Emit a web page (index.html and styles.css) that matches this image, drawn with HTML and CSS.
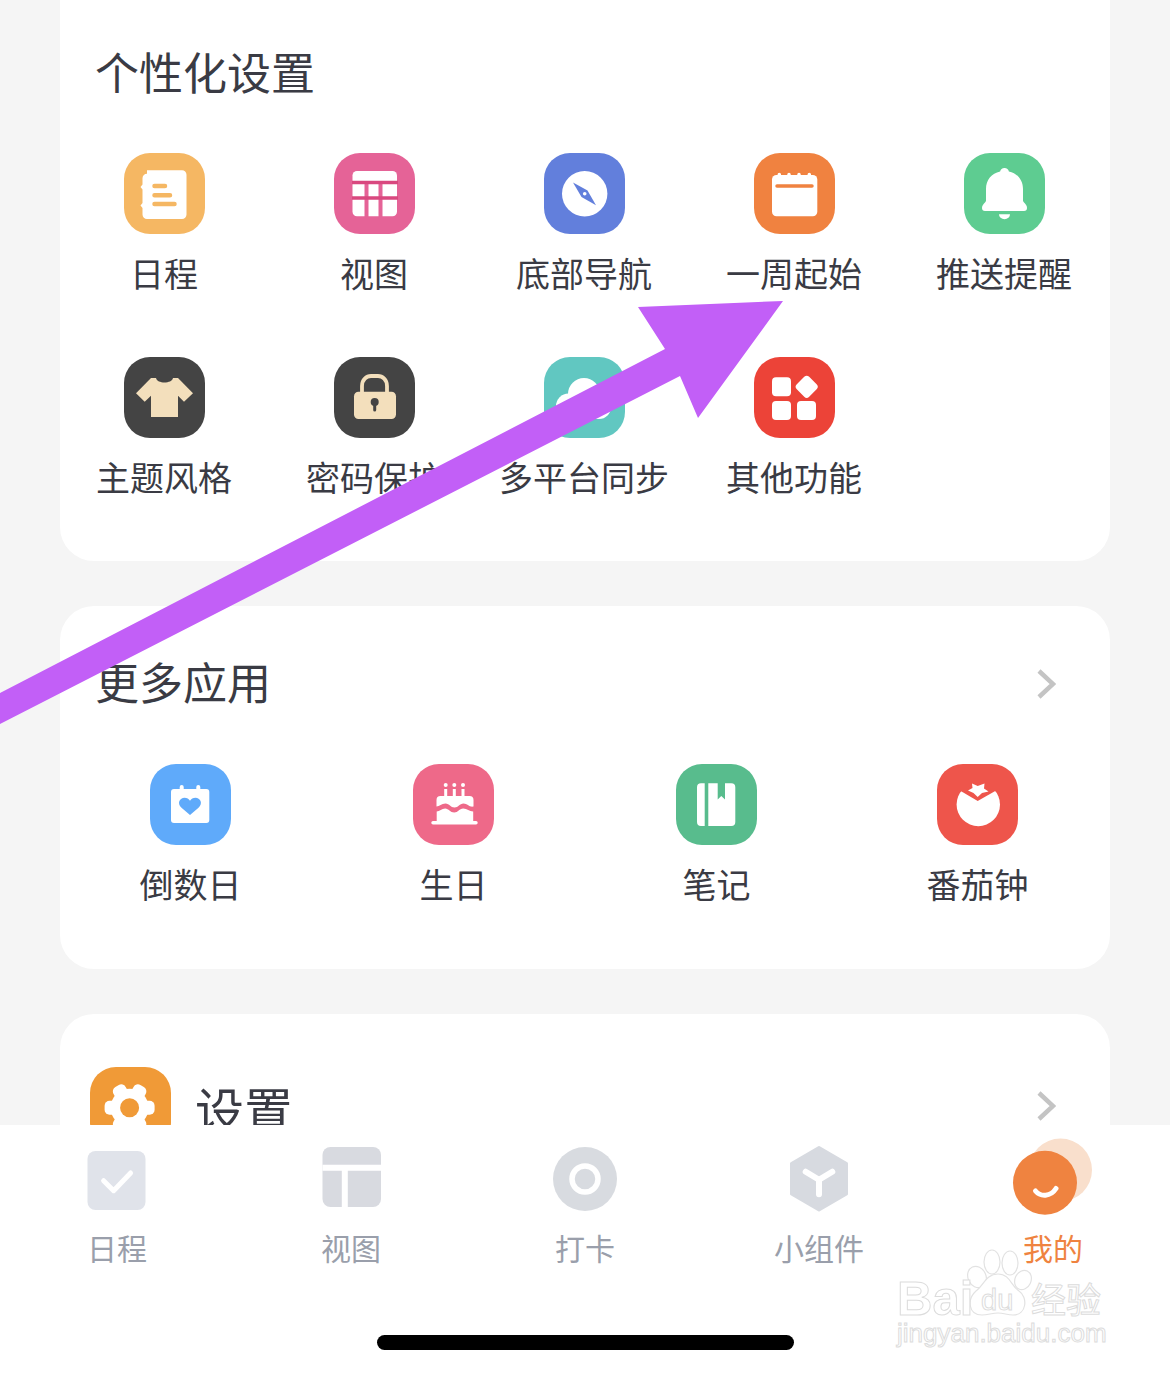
FILE: index.html
```html
<!DOCTYPE html>
<html lang="zh-CN">
<head>
    <meta charset="UTF-8">
    <meta name="viewport" content="width=device-width, initial-scale=1.0">
    <title>我的</title>
    <link rel="stylesheet" href="styles.css">
</head>
<body>
    <div class="page">
        <div class="scroll">
            <section class="card card-personal">
                <h2 class="card-title">个性化设置</h2>
                <div class="grid grid-five">
                    <div class="cell">
                        <div class="tile tile-schedule">
                            <svg viewBox="0 0 81 81"><path fill="#fff" d="M23 17.300h35a4.500 4.500 0 0 1 4.500 4.500v39.700a4.500 4.500 0 0 1-4.500 4.500h-35a4.500 4.500 0 0 1-4.500-4.500v-6.500l-2-2.500 2-2.500v-13.500l-2-2.500 2-2.500v-6.200a4.500 4.500 0 0 1 4.500-4.500z"/><path stroke="#f5b763" stroke-width="4.500" stroke-linecap="round" d="M30.500 33h10.500M30.500 42.300h15.500M30.500 51h20"/></svg>
                        </div>
                        <div class="cell-label">日程</div>
                    </div>
                    <div class="cell">
                        <div class="tile tile-view">
                            <svg viewBox="0 0 81 81"><path fill="#fff" d="M23 18h35.500a4.500 4.500 0 0 1 4.500 4.500v36.300a4.500 4.500 0 0 1-4.500 4.500h-35.500a4.500 4.500 0 0 1-4.500-4.500v-36.300a4.500 4.500 0 0 1 4.500-4.500z"/><path stroke="#e56397" stroke-width="4" d="M32.500 29v35M46.500 29v35"/><path stroke="#d9487f" stroke-width="3.500" d="M18 29.500h46M18 45h46"/></svg>
                        </div>
                        <div class="cell-label">视图</div>
                    </div>
                    <div class="cell">
                        <div class="tile tile-nav">
                            <svg viewBox="0 0 81 81"><circle cx="40.700" cy="40.700" r="22.700" fill="#fff"/><path fill="#627fdc" d="M29 29.500l14.500 8 8.500 14.800-14.500-8.300z"/><circle cx="40.700" cy="40.700" r="1.800" fill="#fff"/></svg>
                        </div>
                        <div class="cell-label">底部导航</div>
                    </div>
                    <div class="cell">
                        <div class="tile tile-week">
                            <svg viewBox="0 0 81 81"><rect x="18" y="22" width="45.300" height="41.300" rx="4.500" fill="#fff"/><path stroke="#fff" stroke-width="3.500" stroke-linecap="round" d="M25.300 21.500v2M35 21.500v2M45 21.500v2M55.300 21.500v2"/><path stroke="#f08240" stroke-width="3.500" stroke-linecap="round" d="M23 33h35"/></svg>
                        </div>
                        <div class="cell-label">一周起始</div>
                    </div>
                    <div class="cell">
                        <div class="tile tile-push">
                            <svg viewBox="0 0 81 81"><path fill="#fff" d="M40.500 15a4.500 4.500 0 0 1 4.400 3.500c8.600 1.800 14.100 8.700 14.100 17.500v11.500c0 2 4 3.500 4 7.500a3 3 0 0 1-3 3h-39a3 3 0 0 1-3-3c0-4 4-5.500 4-7.500v-11.500c0-8.800 5.500-15.700 14.100-17.500a4.500 4.500 0 0 1 4.400-3.500z"/><path fill="#fff" d="M35 61.300h11a5.500 5 0 0 1-11 0z"/></svg>
                        </div>
                        <div class="cell-label">推送提醒</div>
                    </div>
                    <div class="cell">
                        <div class="tile tile-theme">
                            <svg viewBox="0 0 81 81"><path fill="#f3dfbc" d="M27 21h5c1 6 16 6 17 0h5l15 15.300-9 8.400-6-6v21.300h-27v-21.300l-6.300 6-8.700-8.400z"/></svg>
                        </div>
                        <div class="cell-label">主题风格</div>
                    </div>
                    <div class="cell">
                        <div class="tile tile-theme">
                            <svg viewBox="0 0 81 81"><path fill="none" stroke="#f3dfbc" stroke-width="3.800" d="M28 36v-7c0-6.500 4.500-10 9-10h7c4.500 0 9 3.500 9 10v7"/><rect x="20" y="34.700" width="42" height="27.300" rx="4.500" fill="#f3dfbc"/><circle cx="40.700" cy="45" r="4" fill="#444"/><path stroke="#444" stroke-width="3" stroke-linecap="round" d="M40.700 46v7"/></svg>
                        </div>
                        <div class="cell-label">密码保护</div>
                    </div>
                    <div class="cell">
                        <div class="tile tile-sync">
                            <svg viewBox="0 0 81 81"><g fill="#fff"><circle cx="40" cy="37" r="16"/><circle cx="24.500" cy="49" r="12.500"/><circle cx="55" cy="50" r="12"/><rect x="24" y="45" width="31" height="17"/></g></svg>
                        </div>
                        <div class="cell-label">多平台同步</div>
                    </div>
                    <div class="cell">
                        <div class="tile tile-other">
                            <svg viewBox="0 0 81 81"><g fill="#fff"><rect x="18" y="20.300" width="19" height="19" rx="4"/><rect x="18" y="44" width="19" height="19" rx="4"/><rect x="43" y="44" width="19" height="19" rx="4"/><rect x="44" y="21" width="17.500" height="17.500" rx="3.500" transform="rotate(45 52.700 29.700)"/></g></svg>
                        </div>
                        <div class="cell-label">其他功能</div>
                    </div>
                </div>
            </section>

            <section class="card card-more">
                <div class="card-head">
                    <h2 class="card-title">更多应用</h2>
                    <svg class="chevron chevron-head" viewBox="0 0 20 30"><path d="M3 2l14 13-14 13"/></svg>
                </div>
                <div class="grid grid-four">
                    <div class="cell">
                        <div class="tile tile-countdown">
                            <svg viewBox="0 0 81 81"><rect x="21" y="25" width="38.300" height="34" rx="3" fill="#fff"/><path stroke="#fff" stroke-width="4" stroke-linecap="round" d="M31.700 23v4M48.300 23v4"/><path fill="#5faafa" d="M40 51l-8.500-7.300c-5-4.500-1.500-10 3-10 2.500 0 4.300 1.200 5.500 3 1.200-1.800 3-3 5.500-3 4.500 0 8 5.500 3 10z"/></svg>
                        </div>
                        <div class="cell-label">倒数日</div>
                    </div>
                    <div class="cell">
                        <div class="tile tile-birthday">
                            <svg viewBox="0 0 81 81"><g fill="#fff"><circle cx="32.700" cy="21" r="2"/><circle cx="41.300" cy="21" r="2"/><circle cx="50" cy="21" r="2"/><rect x="31.200" y="25" width="3" height="8"/><rect x="39.800" y="25" width="3" height="8"/><rect x="48.500" y="25" width="3" height="8"/><path d="M27.500 32h29a4 4 0 0 1 4 4v6.500c-4 1-6-3-10-3s-5 4-9 4-5-4-9-4-6 3-9 3v-6.500a4 4 0 0 1 4-4z"/><path d="M23.700 47.500c3 0 5-3 8.500-3s5 4 9 4 5-4 9-4 6 3 10 3v10h-36.500z"/><rect x="18.300" y="57" width="46.400" height="3.500" rx="1.700"/></g></svg>
                        </div>
                        <div class="cell-label">生日</div>
                    </div>
                    <div class="cell">
                        <div class="tile tile-note">
                            <svg viewBox="0 0 81 81"><path fill="#fff" d="M25 19.300h3.700v42.700h-3.700a4 4 0 0 1-4-4v-34.700a4 4 0 0 1 4-4zM32.300 19.300h9.400v16.200l3.600-3.500 3.700 3.500v-16.200h6.300a4 4 0 0 1 4 4v34.700a4 4 0 0 1-4 4h-23z"/></svg>
                        </div>
                        <div class="cell-label">笔记</div>
                    </div>
                    <div class="cell">
                        <div class="tile tile-tomato">
                            <svg viewBox="0 0 81 81"><circle cx="41.300" cy="40.500" r="21.700" fill="#fff"/><path fill="#ee554b" d="M22 15h38v11l-19.300 11-18.700-11z"/><path fill="#fff" d="M35 19.500l5.700 2.500 6.800-2.500-.5 5 4.500 3-6.500 1.500-4.300 4-4.200-4-5.500-2.500 4.500-2.500z"/></svg>
                        </div>
                        <div class="cell-label">番茄钟</div>
                    </div>
                </div>
            </section>

            <section class="card card-settings">
                <div class="settings-row">
                    <div class="tile tile-settings">
                        <svg viewBox="0 0 81 81"><g fill="#fff"><circle cx="39.600" cy="40.700" r="19"/><rect x="14.600" y="33.700" width="50" height="14" rx="5"/><rect x="14.600" y="33.700" width="50" height="14" rx="5" transform="rotate(60 39.600 40.700)"/><rect x="14.600" y="33.700" width="50" height="14" rx="5" transform="rotate(120 39.600 40.700)"/></g><circle cx="39.600" cy="40.700" r="9.500" fill="#f09a37"/></svg>
                    </div>
                    <div class="settings-name">设置</div>
                    <svg class="chevron chevron-end" viewBox="0 0 20 30"><path d="M3 2l14 13-14 13"/></svg>
                </div>
            </section>
        </div>

        <nav class="tabbar">
            <div class="tabs">
                <div class="tab">
                    <svg class="tab-icon" viewBox="0 0 120 72"><rect x="30.500" y="8" width="58" height="59" rx="8" fill="#e0e3ea"/><path fill="none" stroke="#fff" stroke-width="5" stroke-linecap="round" stroke-linejoin="round" d="M46.600 37.700l10 10 17-17.700"/></svg>
                    <span>日程</span>
                </div>
                <div class="tab">
                    <svg class="tab-icon" viewBox="0 0 120 72"><rect x="31.500" y="4" width="58.500" height="60" rx="8" fill="#d8dae0"/><path stroke="#fff" stroke-width="6" d="M31.500 24.700h58.500M53.800 24.700v40"/></svg>
                    <span>视图</span>
                </div>
                <div class="tab">
                    <svg class="tab-icon" viewBox="0 0 120 72"><circle cx="60" cy="36" r="32" fill="#d8dbe0"/><circle cx="60" cy="36" r="13" fill="none" stroke="#fff" stroke-width="5.500"/></svg>
                    <span>打卡</span>
                </div>
                <div class="tab">
                    <svg class="tab-icon" viewBox="0 0 120 72"><path fill="#d7dae0" stroke="#d7dae0" stroke-width="3" stroke-linejoin="round" d="M60 4.500l27.500 16v30.500l-27.500 16-27.500-16v-30.500z"/><path fill="none" stroke="#fff" stroke-width="6" stroke-linecap="round" stroke-linejoin="round" d="M46.700 28.700l13.300 8 13.300-8M60 36.700v14.500"/></svg>
                    <span>小组件</span>
                </div>
                <div class="tab tab-active">
                    <svg class="tab-icon" viewBox="0 0 120 72"><circle cx="67.500" cy="27" r="31.500" fill="#f9dfcc"/><circle cx="52" cy="39.700" r="32" fill="#ef8340"/><path fill="none" stroke="#fff" stroke-width="5" stroke-linecap="round" d="M42.500 48c5 6 15 6 20.500-2.500"/></svg>
                    <span>我的</span>
                </div>
            </div>
            <div class="home-bar"></div>
        </nav>

        <svg class="arrow" viewBox="0 0 1170 1374">
            <path fill="#c25ff7" d="M0 693L665 349 638 307 783 301 698 418 680 376 0 724z"/>
        </svg>

        <svg class="watermark" viewBox="0 0 240 110">
            <g class="wm-line">
                <ellipse cx="87" cy="29" rx="9" ry="11" transform="rotate(-25 87 29)"/>
                <ellipse cx="102" cy="14" rx="8" ry="12"/>
                <ellipse cx="120" cy="15" rx="8" ry="12"/>
                <ellipse cx="133" cy="32" rx="8" ry="10" transform="rotate(25 133 32)"/>
                <path d="M108 26c12 0 13 12 21 17 9 6 8 24-6 24-6 0-9-2-15-2s-10 2-16 2c-14 0-15-16-6-24 8-6 10-17 22-17z"/>
            </g>
            <text class="wm-text wm-big" x="7" y="67">Bai</text>
            <text class="wm-text wm-du" x="91" y="62">du</text>
            <text class="wm-text wm-cn" x="141" y="65">经验</text>
            <text class="wm-text wm-url" x="7" y="94">jingyan.baidu.com</text>
        </svg>
    </div>
</body>
</html>
```

FILE: styles.css
```css
html, body {
    margin: 0;
    padding: 0;
}
body {
    font-family: "Noto Sans CJK SC", "Noto Sans", sans-serif;
    background-color: #f5f5f5;
    color: #3a3b44;
}
.page {
    position: relative;
    width: 1170px;
    height: 1374px;
    overflow: hidden;
}
.scroll {
    height: 1125px;
    overflow: hidden;
    padding: 0 60px;
}
.card {
    background-color: #fff;
    border-radius: 34px;
    margin-bottom: 45px;
}
.card-personal {
    margin-top: -40px;
    padding: 81px 0 62px;
}
.card-more {
    padding: 45px 0 63px;
}
.card-settings {
    padding: 53px 30px 0;
    height: 200px;
}
.card-title {
    margin: 0 0 0 35px;
    font-size: 44px;
    font-weight: 400;
    line-height: 60px;
}
.card-head {
    display: flex;
    justify-content: space-between;
    align-items: center;
    padding-right: 54px;
}
.chevron {
    width: 20px;
    height: 30px;
    fill: none;
    stroke: #c4c4c4;
    stroke-width: 4.5;
}
.chevron-head {
    margin-top: 6px;
}
.chevron-end {
    align-self: center;
    margin-left: auto;
    margin-right: 24px;
    margin-bottom: 3px;
}
.grid {
    display: grid;
    margin-left: -1px;
}
.grid-five {
    grid-template-columns: repeat(5, 210px);
    row-gap: 62px;
    margin-top: 52px;
}
.grid-four {
    grid-template-columns: 263px 263px 263px 259px;
    margin-top: 53px;
}
.cell {
    display: flex;
    flex-direction: column;
    align-items: center;
}
.cell-label {
    margin-top: 18px;
    margin-bottom: 2px;
    font-size: 34px;
    line-height: 41px;
    white-space: nowrap;
}
.tile {
    width: 81px;
    height: 81px;
    border-radius: 26px;
    flex-shrink: 0;
}
.tile svg {
    display: block;
    width: 81px;
    height: 81px;
}
.tile-schedule { background-color: #f5b763; }
.tile-view { background-color: #e56397; }
.tile-nav { background-color: #627fdc; }
.tile-week { background-color: #f08240; }
.tile-push { background-color: #5ecc91; }
.tile-theme { background-color: #444; }
.tile-sync { background-color: #61c7c1; }
.tile-other { background-color: #ec4338; }
.tile-countdown { background-color: #5faafa; }
.tile-birthday { background-color: #ee6989; }
.tile-note { background-color: #58bc8d; }
.tile-tomato { background-color: #ee554b; }
.tile-settings { background-color: #f09a37; }
.settings-row {
    display: flex;
    align-items: flex-start;
}
.settings-name {
    margin-left: 24px;
    font-size: 49px;
    line-height: 81px;
}
.tabbar {
    height: 249px;
    background-color: #fff;
    position: relative;
}
.tabs {
    display: grid;
    grid-template-columns: repeat(5, 1fr);
    padding-top: 18px;
}
.tab {
    display: flex;
    flex-direction: column;
    align-items: center;
    font-size: 30px;
    line-height: 40px;
    color: #9a9fab;
}
.tab-icon {
    display: block;
    width: 120px;
    height: 72px;
    margin-bottom: 12px;
    overflow: visible;
}
.tab-active {
    color: #ef8340;
}
.home-bar {
    width: 417px;
    height: 15px;
    margin: 68px auto 0;
    background-color: #000;
    border-radius: 8px;
}
.arrow {
    position: absolute;
    left: 0;
    top: 0;
    width: 1170px;
    height: 1374px;
    pointer-events: none;
}
.watermark {
    position: absolute;
    left: 890px;
    top: 1248px;
    width: 240px;
    height: 110px;
    pointer-events: none;
}
.wm-line {
    fill: #fff;
    stroke: #e2e2e2;
    stroke-width: 1.2;
}
.wm-text {
    fill: #fff;
    stroke: #dcdcdc;
    stroke-width: 1;
    font-family: "Liberation Sans", sans-serif;
}
.wm-big {
    font-size: 49px;
    font-weight: 700;
}
.wm-du {
    font-size: 29px;
}
.wm-cn {
    font-size: 35px;
    font-family: "Noto Sans CJK SC", sans-serif;
}
.wm-url {
    font-size: 26px;
}
```
